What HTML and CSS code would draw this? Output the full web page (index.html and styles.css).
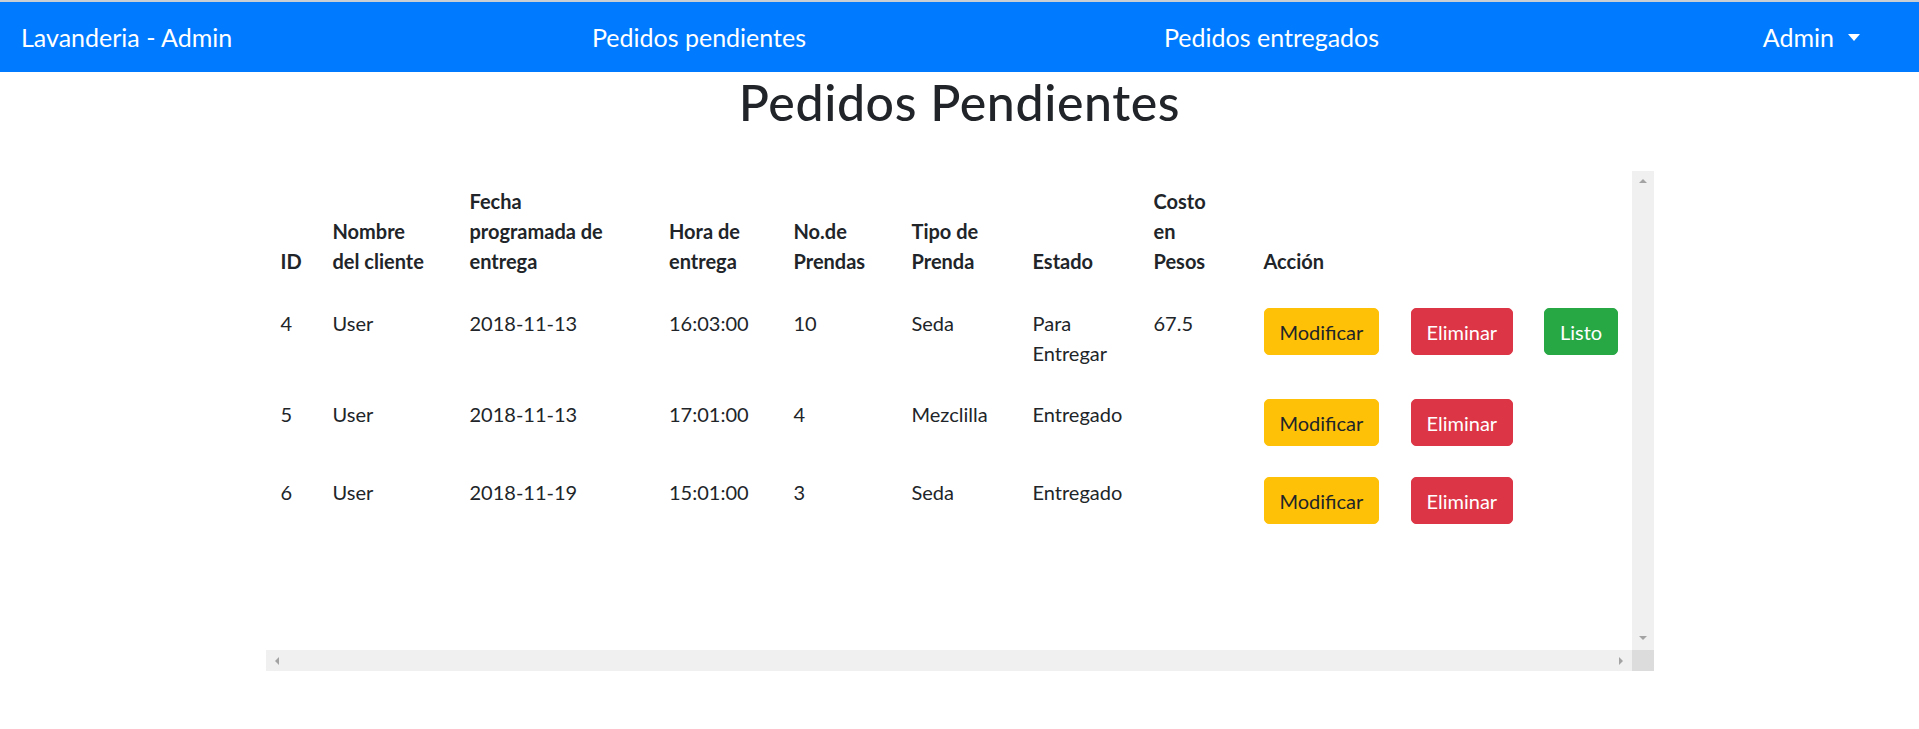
FILE: index.html
```html
<!DOCTYPE html>
<html lang="es">
<head>
<meta charset="utf-8">
<title>Lavanderia - Admin</title>
<link rel="stylesheet" href="styles.css">
</head>
<body>
<nav class="navbar">
  <a class="brand" href="#">Lavanderia - Admin</a>
  <a class="nav-link" href="#">Pedidos pendientes</a>
  <a class="nav-link" href="#">Pedidos entregados</a>
  <a class="nav-link dropdown" href="#">Admin<span class="caret"></span></a>
</nav>
<main class="container">
  <h1 class="page-title">Pedidos Pendientes</h1>
  <div class="scroll-box">
    <div class="scroll-view">
      <table class="orders">
        <colgroup>
          <col class="c-id"><col class="c-name"><col class="c-date"><col class="c-time"><col class="c-num">
          <col class="c-type"><col class="c-state"><col class="c-cost"><col class="c-act1"><col class="c-act2"><col class="c-act3">
        </colgroup>
        <thead>
          <tr>
            <th>ID</th>
            <th>Nombre<br>del cliente</th>
            <th>Fecha<br>programada de<br>entrega</th>
            <th>Hora de<br>entrega</th>
            <th>No.de<br>Prendas</th>
            <th>Tipo de<br>Prenda</th>
            <th>Estado</th>
            <th>Costo<br>en<br>Pesos</th>
            <th>Acción</th>
            <th></th>
            <th></th>
          </tr>
        </thead>
        <tbody>
          <tr>
            <td>4</td><td>User</td><td>2018-11-13</td><td>16:03:00</td><td>10</td><td>Seda</td><td>Para Entregar</td><td>67.5</td>
            <td><button class="btn btn-warning">Modificar</button></td>
            <td><button class="btn btn-danger">Eliminar</button></td>
            <td><button class="btn btn-success">Listo</button></td>
          </tr>
          <tr>
            <td>5</td><td>User</td><td>2018-11-13</td><td>17:01:00</td><td>4</td><td>Mezclilla</td><td>Entregado</td><td></td>
            <td><button class="btn btn-warning">Modificar</button></td>
            <td><button class="btn btn-danger">Eliminar</button></td>
            <td></td>
          </tr>
          <tr>
            <td>6</td><td>User</td><td>2018-11-19</td><td>15:01:00</td><td>3</td><td>Seda</td><td>Entregado</td><td></td>
            <td><button class="btn btn-warning">Modificar</button></td>
            <td><button class="btn btn-danger">Eliminar</button></td>
            <td></td>
          </tr>
        </tbody>
      </table>
    </div>
    <div class="vbar"><span class="arrow up"></span><span class="arrow down"></span></div>
    <div class="hbar"><span class="arrow left"></span><span class="arrow right"></span></div>
    <div class="corner"></div>
  </div>
</main>
</body>
</html>
```
FILE: styles.css
```css
* { box-sizing: border-box; }

html, body {
  margin: 0;
  padding: 0;
  background: #fff;
}

body {
  font-family: Lato, "Open Sans", "Liberation Sans", sans-serif;
  font-size: 20px;
  line-height: 30px;
  color: #212529;
}

/* Navbar */
.navbar {
  display: grid;
  grid-template-columns: 571px 572px 1fr auto;
  align-items: center;
  height: 72px;
  border-top: 2px solid #c9ced4;
  background: #007bff;
  padding: 0 59px 0 21px;
}

.brand,
.nav-link {
  color: #fff;
  text-decoration: none;
  font-size: 25px;
  line-height: 37px;
  white-space: nowrap;
}

.dropdown {
  display: flex;
  align-items: center;
}

.caret {
  display: inline-block;
  margin-left: 14px;
  width: 0;
  height: 0;
  border-top: 7px solid #fff;
  border-left: 6.5px solid transparent;
  border-right: 6.5px solid transparent;
}

/* Content */
.container {
  width: 1388px;
  margin: 0 auto;
}

.page-title {
  margin: 0 0 39px;
  font-size: 50px;
  line-height: 60px;
  font-weight: 500;
  letter-spacing: 0.6px;
  text-align: center;
  color: #212529;
}

.scroll-box {
  display: grid;
  grid-template-columns: 1fr 22px;
  grid-template-rows: 479px 21px;
}

.scroll-view {
  overflow: hidden;
}

.orders {
  width: 100%;
  table-layout: fixed;
  border-collapse: collapse;
}

.c-id { width: 52px; }
.c-name { width: 137px; }
.c-date { width: 199.5px; }
.c-time { width: 124.5px; }
.c-num { width: 118px; }
.c-type { width: 121px; }
.c-state { width: 121px; }
.c-cost { width: 110px; }
.c-act1 { width: 147px; }
.c-act2 { width: 133.5px; }
.c-act3 { width: 102.5px; }

.orders th,
.orders td {
  padding: 15px;
  text-align: left;
}

.orders th {
  vertical-align: bottom;
  font-weight: 700;
  border-bottom: 2px solid transparent;
}

.orders td {
  vertical-align: top;
  border-top: 1px solid transparent;
}

/* Buttons */
.btn {
  display: inline-block;
  font-family: inherit;
  font-size: 20px;
  line-height: 30px;
  padding: 7.5px 15px;
  border: 1px solid transparent;
  border-radius: 5px;
  white-space: nowrap;
  cursor: pointer;
}

.btn-warning { background: #ffc107; border-color: #ffc107; color: #212529; }
.btn-danger { background: #dc3545; border-color: #dc3545; color: #fff; }
.btn-success { background: #28a745; border-color: #28a745; color: #fff; }

/* Fake classic scrollbars */
.vbar {
  background: #f0f0f0;
  display: flex;
  flex-direction: column;
  align-items: center;
  justify-content: space-between;
  padding: 8px 0 10px;
}

.hbar {
  background: #f0f0f0;
  display: flex;
  align-items: center;
  justify-content: space-between;
  padding: 0 9px;
}

.corner {
  background: #dcdcdc;
}

.arrow {
  display: block;
  width: 0;
  height: 0;
}

.arrow.up {
  border-left: 4px solid transparent;
  border-right: 4px solid transparent;
  border-bottom: 4px solid #a3a3a3;
}

.arrow.down {
  border-left: 4px solid transparent;
  border-right: 4px solid transparent;
  border-top: 4px solid #a3a3a3;
}

.arrow.left {
  border-top: 4px solid transparent;
  border-bottom: 4px solid transparent;
  border-right: 4px solid #a3a3a3;
}

.arrow.right {
  border-top: 4px solid transparent;
  border-bottom: 4px solid transparent;
  border-left: 4px solid #a3a3a3;
}
```
